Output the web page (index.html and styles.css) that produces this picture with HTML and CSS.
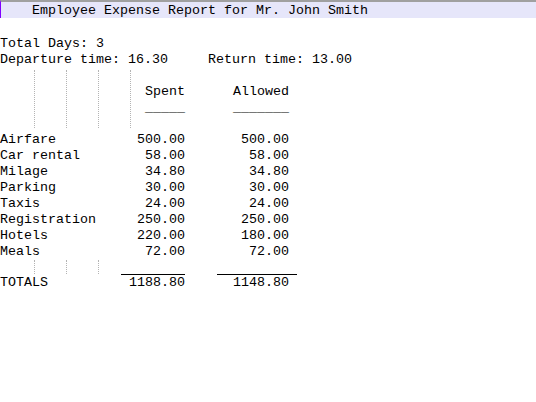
FILE: index.html
```html
<!DOCTYPE html>
<html>
<head>
<meta charset="utf-8">
<link rel="stylesheet" href="styles.css">
</head>
<body>
<div class="title">Employee Expense Report for Mr. John Smith</div>
<div class="blank"></div>
<div class="line">Total Days: 3</div>
<div class="line">Departure time: 16.30     Return time: 13.00</div>

<div class="head">
  <div class="guides tall">
    <div class="g first"></div><div class="g"></div><div class="g"></div><div class="g"></div>
  </div>
  <div class="hcol spent-h">
    <div class="line">&nbsp;</div>
    <div class="line">Spent</div>
    <div class="line">_____</div>
  </div>
  <div class="hcol allowed-h">
    <div class="line">&nbsp;</div>
    <div class="line">Allowed</div>
    <div class="line">_______</div>
  </div>
</div>

<div class="rows">
  <div class="lbl">Airfare</div><div class="num">500.00</div><div class="num al">500.00</div>
  <div class="lbl">Car rental</div><div class="num">58.00</div><div class="num al">58.00</div>
  <div class="lbl">Milage</div><div class="num">34.80</div><div class="num al">34.80</div>
  <div class="lbl">Parking</div><div class="num">30.00</div><div class="num al">30.00</div>
  <div class="lbl">Taxis</div><div class="num">24.00</div><div class="num al">24.00</div>
  <div class="lbl">Registration</div><div class="num">250.00</div><div class="num al">250.00</div>
  <div class="lbl">Hotels</div><div class="num">220.00</div><div class="num al">180.00</div>
  <div class="lbl">Meals</div><div class="num">72.00</div><div class="num al">72.00</div>
</div>

<div class="sumline">
  <div class="guides short">
    <div class="g first"></div><div class="g"></div><div class="g"></div>
  </div>
  <div class="rule spent-r"></div>
  <div class="rule allowed-r"></div>
</div>

<div class="rows">
  <div class="lbl">TOTALS</div><div class="num">1188.80</div><div class="num al">1148.80</div>
</div>
</body>
</html>
```
FILE: styles.css
```css
html, body {
  margin: 0;
  padding: 0;
  background: #fff;
}
body {
  font-family: "Liberation Mono", "Courier New", monospace;
  font-size: 13.333px;
  line-height: 16px;
  color: #000;
  width: 536px;
}
.title {
  border-top: 2px solid #a0a0a0;
  border-left: 1px solid #8000ff;
  background: #e6e6fa;
  height: 15px;
  padding-top: 1px;
  padding-left: 31px;
  white-space: pre;
}
.blank { height: 18px; }
.line { height: 16px; white-space: pre; }

.head {
  display: flex;
  height: 64px;
}
.guides {
  display: flex;
  width: 131px;
}
.guides.tall {
  margin-top: 2px;
  height: 58px;
}
.g {
  width: 31px;
  border-right: 1px dotted #b4b4b4;
  height: 100%;
}
.g.first { width: 34px; }
.hcol { text-align: right; }
.spent-h { width: 54px; }
.allowed-h { width: 72px; margin-left: 32px; }

.rows {
  display: grid;
  grid-template-columns: 121px 64px 104px;
}
.lbl, .num { height: 16px; white-space: pre; }
.num { text-align: right; }

.sumline {
  display: flex;
  height: 15px;
}
.guides.short {
  width: 121px;
  height: 14px;
}
.rule {
  height: 14px;
  border-bottom: 1px solid #000;
}
.spent-r { width: 64px; }
.allowed-r { width: 80px; margin-left: 32px; }
```
